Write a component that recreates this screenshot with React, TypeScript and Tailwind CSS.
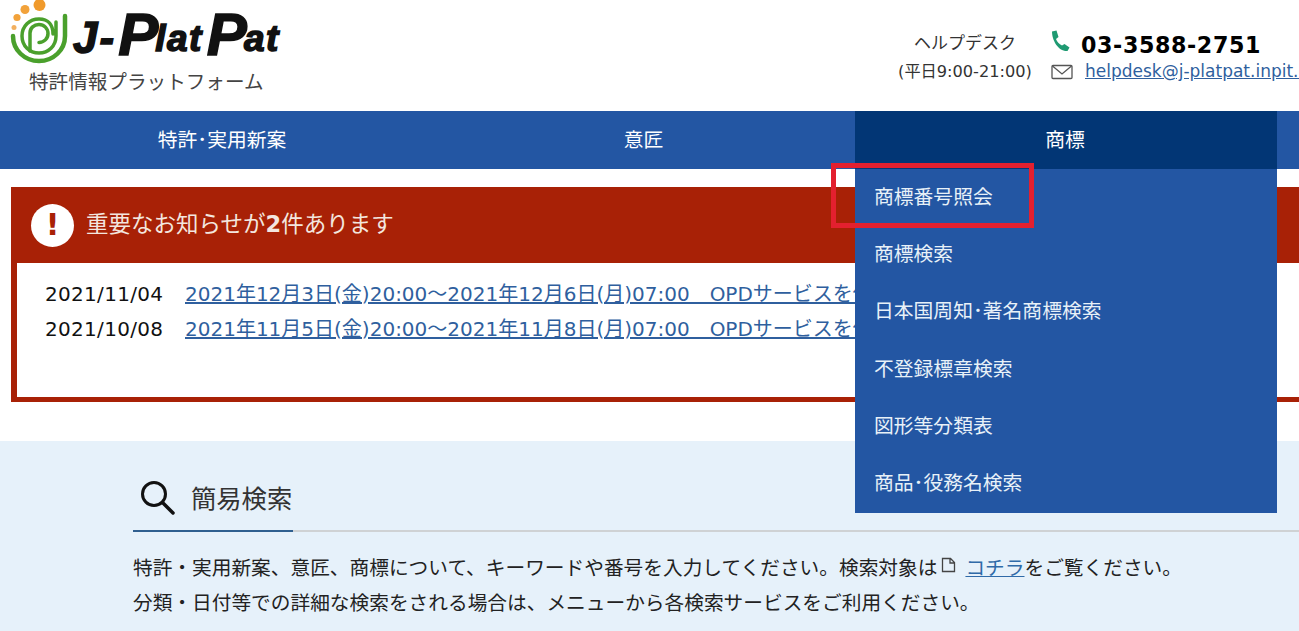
const jp = "font-['DejaVu_Sans','Noto_Sans_CJK_JP',sans-serif]";

function Logo() {
  return (
    <div className="relative w-[300px] h-[111px] shrink-0">
      <svg className="absolute left-0 top-0" width="74" height="66" viewBox="0 0 74 66" fill="none">
        <circle cx="39.500" cy="5" r="6" fill="#f09a2c" />
        <circle cx="25" cy="9.500" r="4.500" fill="#f2a23a" />
        <circle cx="17" cy="17.500" r="3.600" fill="#f2a23a" />
        <circle cx="14" cy="27.500" r="2.500" fill="#f2b060" />
        <path d="M65 16v20c0 14-11.500 25-26 25S13 50 13 36" stroke="#4aa02c" strokeWidth="4.500" strokeLinecap="round" />
        <path d="M56 22v14c0 10-7.500 17-17 17s-17-7-17-17 7.500-17 17-17 14 6 14 15" stroke="#4aa02c" strokeWidth="3.500" strokeLinecap="round" />
        <path d="M30 51V33c0-5 4-8.500 9-8.500s9 4 9 9-4 9-9 9" stroke="#4aa02c" strokeWidth="3.500" strokeLinecap="round" />
      </svg>
      <div className="absolute left-[73px] top-[10px] h-[52px] w-[215px] flex items-end font-['Liberation_Sans',sans-serif] italic font-bold text-[#111] leading-none whitespace-nowrap [-webkit-text-stroke:1.500px_#111]">
        <span className="text-[44px] leading-[48px] tracking-[2px]">J-</span>
        <span className="text-[60px] leading-[54px] ml-[2px]">P</span>
        <span className="text-[37px] leading-[46px] -ml-[3px] tracking-[1.500px]">lat</span>
        <span className="text-[60px] leading-[54px] ml-[4px]">P</span>
        <span className="text-[37px] leading-[46px] -ml-[3px] tracking-[1.500px]">at</span>
      </div>
      <div className={`absolute left-[29px] top-[70px] text-[19.600px] leading-[26px] text-[#444] whitespace-nowrap ${jp}`}>特許情報プラットフォーム</div>
    </div>
  );
}

function Header() {
  return (
    <header className="h-[111px] bg-white flex justify-between overflow-hidden">
      <div className="ml-0"><Logo /></div>
      <div className="w-[401px] shrink-0 pt-[30px] flex text-[#222]">
        <div className="w-[134px] shrink-0 flex flex-col items-center">
          <div className="text-[17px] leading-[26px] text-[#333]">ヘルプデスク</div>
          <div className="text-[16.200px] leading-[24px] mt-[4px] text-[#333] whitespace-nowrap">(平日9:00-21:00)</div>
        </div>
        <div className="ml-[19px] flex flex-col whitespace-nowrap">
          <div className="flex items-center h-[28px] mt-[2px]">
            <svg width="22" height="24" viewBox="0 0 22 24" className="-mt-[8px] -ml-[1px]">
              <path d="M2 1.500 6.500 .5l2 6.500-2.500 2c1 3 3 5 6 6.500l2.500-1.500 5 3.500-2 3.500C8 21.500 2 10 2 1.500z" fill="#1f9a72" />
            </svg>
            <span className="ml-[9px] text-[22.200px] font-bold text-black tracking-[0.6px]">03-3588-2751</span>
          </div>
          <div className="flex items-center h-[24px]">
            <svg width="22" height="16" viewBox="0 0 22 16" fill="none" stroke="#555" strokeWidth="1.300">
              <rect x="1" y="1.500" width="20" height="13" rx="1" />
              <path d="M1.500 2 11 10l9.500-8" />
            </svg>
            <a className="ml-[12px] text-[17px] text-[#2f5f9e] underline">helpdesk@j-platpat.inpit.go.jp</a>
          </div>
        </div>
      </div>
    </header>
  );
}

const menu = ["商標番号照会", "商標検索", "日本国周知･著名商標検索", "不登録標章検索", "図形等分類表", "商品･役務名検索"];

function Nav() {
  return (
    <nav className="relative z-10 h-[58px] bg-[#2356a3] px-[11px] text-white text-[19.800px]">
      <div className="grid grid-cols-[422px_422px_422px] h-full">
        <div className="flex items-center justify-center pt-[1px]">特許･実用新案</div>
        <div className="flex items-center justify-center pt-[1px] pr-[1px]">意匠</div>
        <div className="relative flex items-center justify-center pt-[1px] pr-[2px] bg-[#023675]">
          商標
          <ul className="absolute left-0 top-[58px] w-[422px] h-[344px] bg-[#2356a3]">
            {menu.map((m) => (
              <li key={m} className="h-[57.300px] pl-[19px] flex items-center whitespace-nowrap text-[#e8f1f8]">{m}</li>
            ))}
          </ul>
          <div className="absolute left-[-24px] top-[52px] w-[203px] h-[65px] border-[5px] border-[#e3202f]" />
        </div>
      </div>
    </nav>
  );
}

function Notice() {
  const rows = [
    ["2021/11/04", "2021年12月3日(金)20:00～2021年12月6日(月)07:00　OPDサービスを停止します"],
    ["2021/10/08", "2021年11月5日(金)20:00～2021年11月8日(月)07:00　OPDサービスを停止します"],
  ];
  return (
    <section className="pt-[18px] pl-[11px] pb-[39px]">
      <div className="h-[215px] bg-[#a82106] pl-[6px] pb-[5px] flex flex-col">
        <div className="h-[76px] flex items-center shrink-0 -ml-[6px] pl-[20px]">
          <div className="w-[43px] h-[43px] rounded-full bg-white flex items-center justify-center text-[#a82106] text-[30px] font-bold leading-none">!</div>
          <div className="ml-[12px] text-[22.500px] text-[#f3e6df]">重要なお知らせが<b>2</b>件あります</div>
        </div>
        <div className="flex-1 bg-white pt-[13px] pl-[28px] overflow-hidden">
          {rows.map(([d, t]) => (
            <div key={d} className="h-[35px] flex items-center text-[20px] whitespace-nowrap">
              <span className="text-[#111] w-[140px] shrink-0 tracking-[0.3px]">{d}</span>
              <a className="text-[#2f5f9e] underline">{t}</a>
            </div>
          ))}
        </div>
      </div>
    </section>
  );
}

function Search() {
  return (
    <section className="bg-[#e6f1fa] h-[191px] pl-[133px] pt-[39px] overflow-hidden">
      <div className="border-b-2 border-[#cfd2d4] relative h-[52px] flex items-start">
        <svg width="38" height="38" viewBox="0 0 38 38" fill="none" stroke="#111" strokeWidth="3" className="ml-[5px] -mt-[1px]">
          <circle cx="16" cy="15" r="11.500" />
          <path d="M24.500 23.500 35 34" strokeLinecap="round" strokeWidth="3.500" />
        </svg>
        <span className="ml-[15px] mt-[1px] text-[25.300px] leading-[38px] text-[#333]">簡易検索</span>
        <div className="absolute left-0 bottom-[-2px] w-[160px] h-[2px] bg-[#2f5f8f]" />
      </div>
      <div className="mt-[19px] text-[19.700px] leading-[35px] text-[#222] whitespace-nowrap">
        <p>
          特許・実用新案、意匠、商標について、キーワードや番号を入力してください。検索対象は
          <svg width="15" height="16" viewBox="0 0 15 16" fill="none" stroke="#444" strokeWidth="1.300" className="inline-block align-[2px] ml-[4px]">
            <path d="M1.500 1.500h8l4 4v9h-12zM9 1.500v4.500h4.500" />
          </svg>
          <a className="ml-[9px] text-[#2f6aa8] underline">コチラ</a>をご覧ください。
        </p>
        <p>分類・日付等での詳細な検索をされる場合は、メニューから各検索サービスをご利用ください。</p>
      </div>
    </section>
  );
}

export default function App() {
  return (
    <div className={`w-[1299px] h-[631px] overflow-hidden bg-white ${jp}`}>
      <Header />
      <Nav />
      <Notice />
      <Search />
    </div>
  );
}
